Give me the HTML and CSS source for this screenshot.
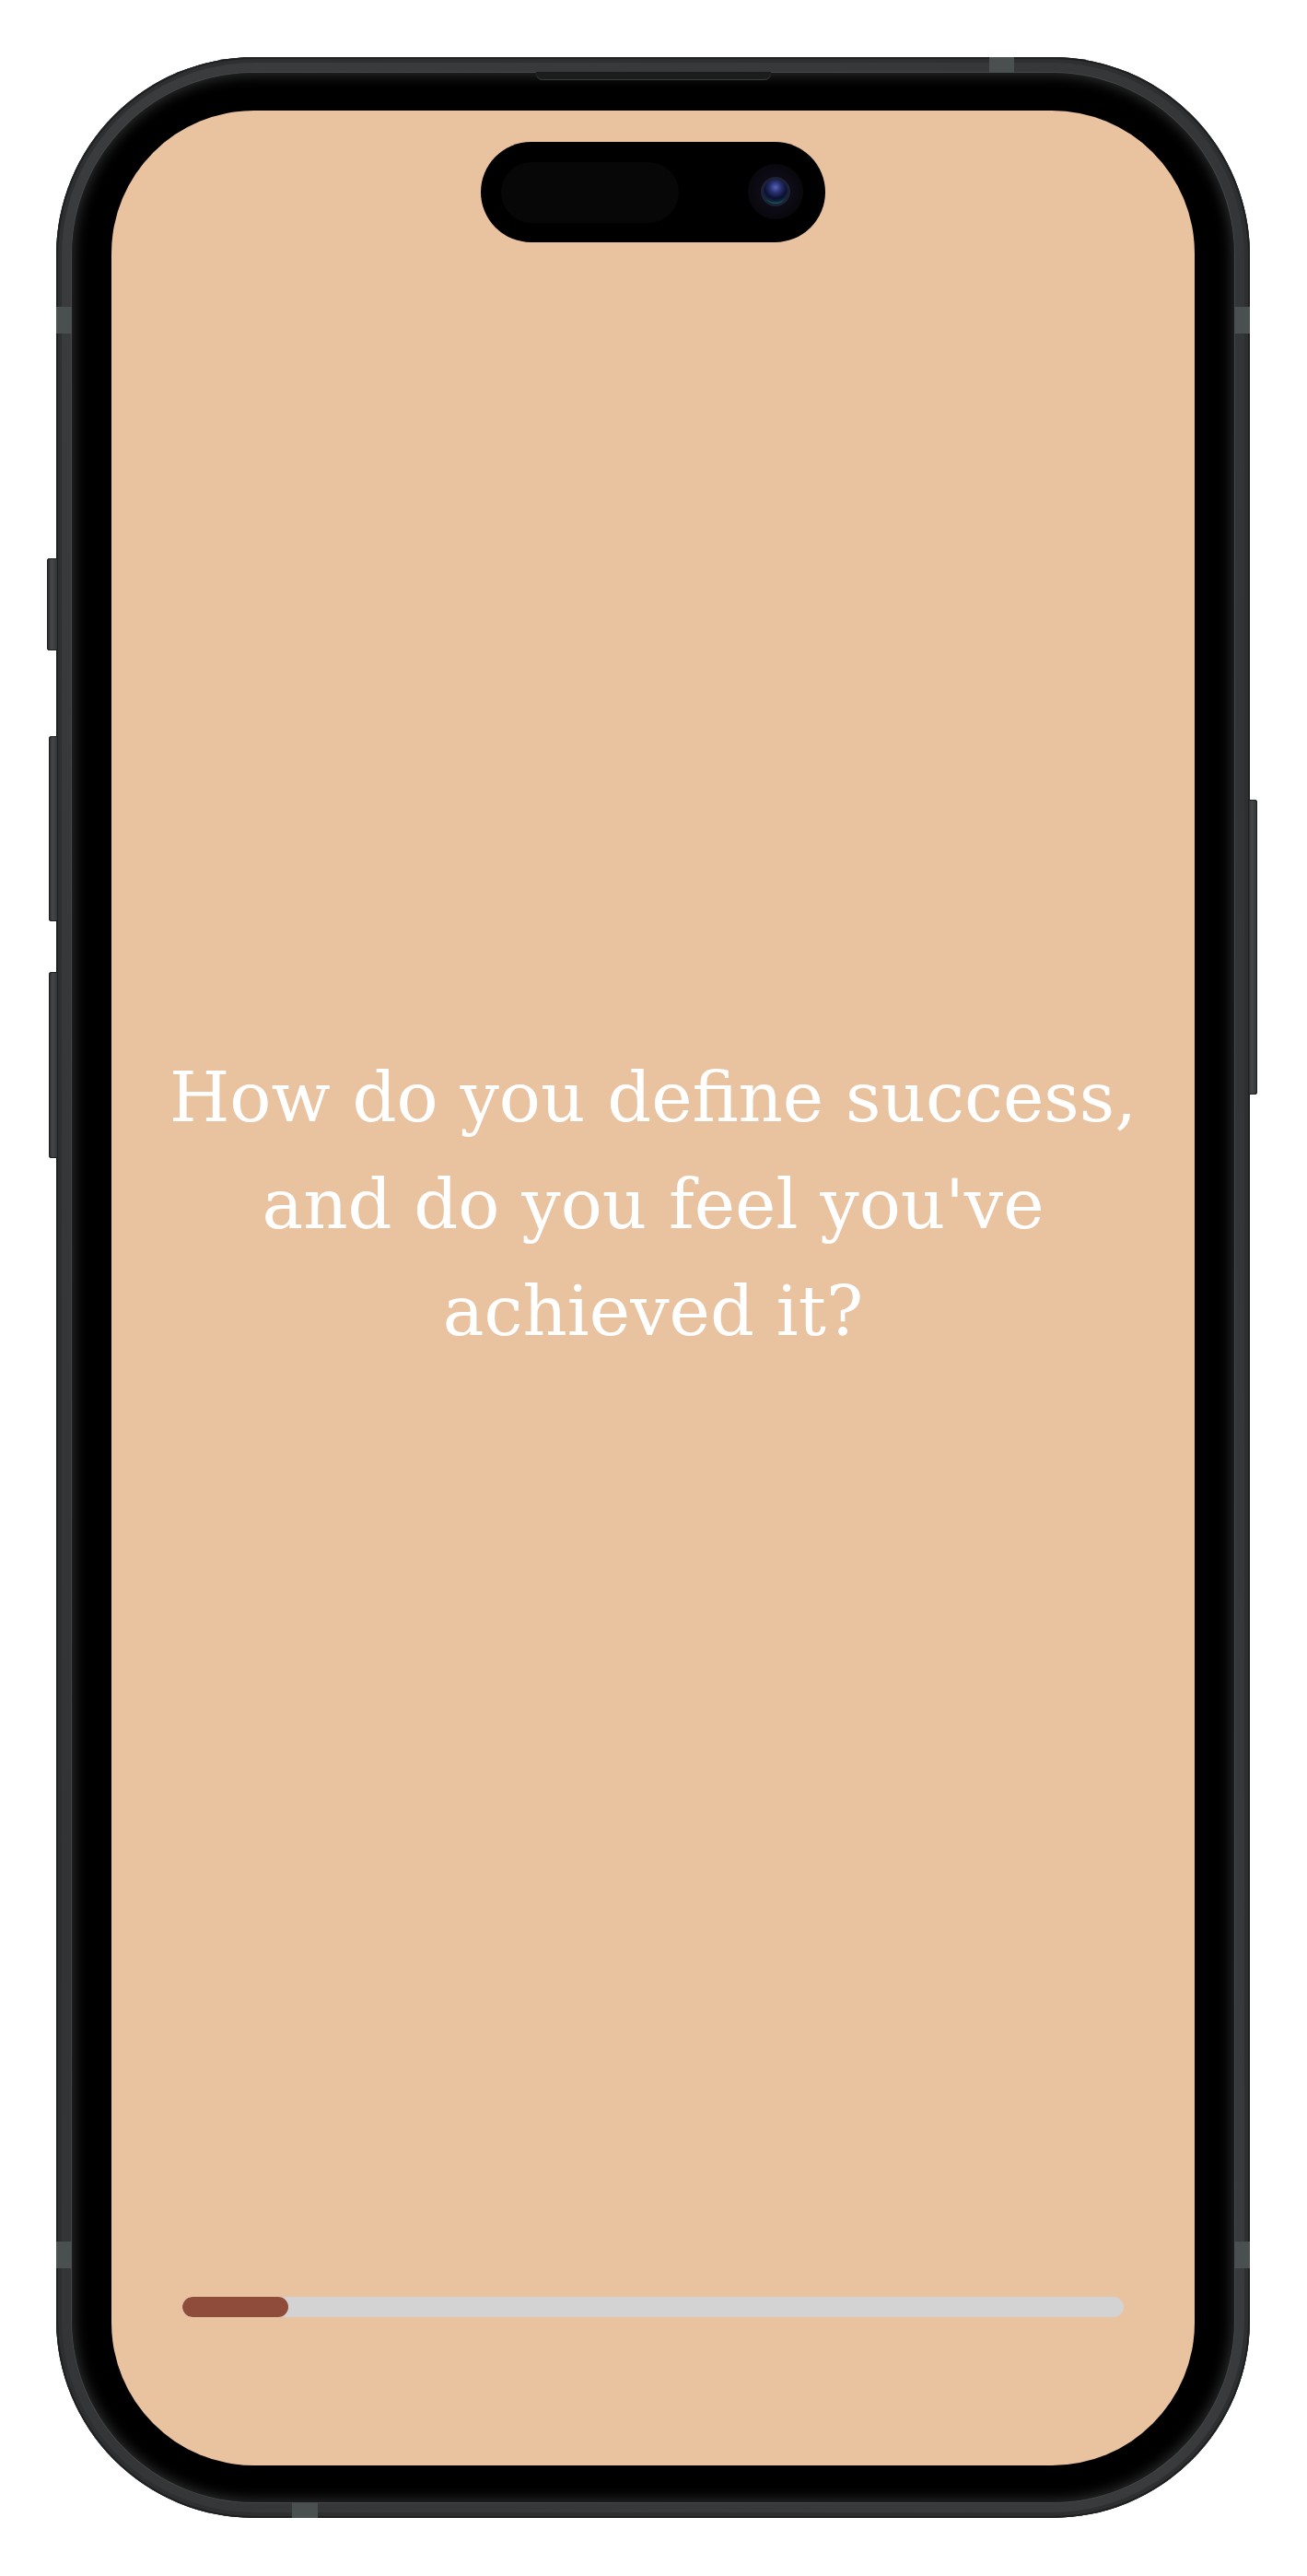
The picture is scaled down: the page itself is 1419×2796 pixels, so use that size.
FILE: index.html
```html
<!DOCTYPE html>
<html lang="en">
<head>
<meta charset="utf-8">
<title>Question</title>
<link rel="stylesheet" href="styles.css">
</head>
<body>
<div class="page">
  <div class="phone">
    <span class="btn btn-action"></span>
    <span class="btn btn-vol-up"></span>
    <span class="btn btn-vol-down"></span>
    <span class="btn btn-power"></span>
    <span class="band band-top"></span>
    <span class="band band-left-top"></span>
    <span class="band band-right-top"></span>
    <span class="band band-left-bottom"></span>
    <span class="band band-right-bottom"></span>
    <span class="band band-bottom"></span>
    <span class="speaker"></span>
    <div class="bezel">
      <div class="screen">
        <div class="island">
          <span class="island-pill"></span>
          <span class="camera"><span class="lens"></span></span>
        </div>
        <main class="question-area">
          <h1 class="question">How do you define success,<br>and do you feel you've<br>achieved it?</h1>
        </main>
        <div class="progress-area">
          <div class="track"><div class="fill" style="width: 11.25%"></div></div>
        </div>
      </div>
    </div>
  </div>
</div>
</body>
</html>
```
FILE: styles.css
```css
html, body {
  margin: 0;
  padding: 0;
  background: #ffffff;
}

.page {
  width: 1419px;
  height: 2796px;
  box-sizing: border-box;
  padding: 62px 0 0 61px;
}

.phone {
  position: relative;
  width: 1296px;
  height: 2671px;
  box-sizing: border-box;
  padding: 17px;
  border-radius: 215px;
  background: linear-gradient(135deg, #3a3c3d 0%, #313334 50%, #393b3c 100%);
  box-shadow: inset 0 0 0 2px #1f2021, inset 0 0 0 6px #2d2f30;
}

.btn {
  position: absolute;
  background: linear-gradient(90deg, #262728 0%, #46484a 40%, #2f3132 100%);
  box-shadow: inset 0 0 0 1px #1e1f20;
}
.btn-action { left: -10px; top: 544px; width: 12px; height: 100px; border-radius: 3px 0 0 3px; }
.btn-vol-up { left: -8px; top: 737px; width: 10px; height: 201px; border-radius: 3px 0 0 3px; }
.btn-vol-down { left: -8px; top: 993px; width: 10px; height: 202px; border-radius: 3px 0 0 3px; }
.btn-power { left: 1294px; top: 806px; width: 10px; height: 320px; border-radius: 0 3px 3px 0; }

.band {
  position: absolute;
  background: #4a4f4f;
}
.band-top { left: 1013px; top: 0; width: 27px; height: 17px; }
.band-left-top { left: 0; top: 271px; width: 17px; height: 29px; }
.band-right-top { right: 0; top: 271px; width: 17px; height: 29px; }
.band-left-bottom { left: 0; top: 2371px; width: 17px; height: 29px; }
.band-right-bottom { right: 0; top: 2371px; width: 17px; height: 29px; }
.band-bottom { left: 256px; bottom: 0; width: 28px; height: 17px; }

.speaker {
  position: absolute;
  left: 521px;
  top: 16px;
  width: 255px;
  height: 9px;
  border-radius: 0 0 7px 7px;
  background: #1b1c1c;
  box-shadow: inset 0 -1px 0 #3a3b3c;
  z-index: 2;
}

.bezel {
  height: 100%;
  box-sizing: border-box;
  padding: 41px 43px 40px 43px;
  border-radius: 198px;
  background: #000000;
  box-shadow: 0 0 0 1px #454748, inset 0 0 14px 3px rgba(85, 87, 88, 0.5);
}

.screen {
  position: relative;
  height: 100%;
  border-radius: 155px;
  background: #e9c2a0;
  display: flex;
  flex-direction: column;
  overflow: hidden;
}

.island {
  position: absolute;
  left: 401px;
  top: 34px;
  width: 374px;
  height: 109px;
  border-radius: 55px;
  background: #000000;
}
.island-pill {
  position: absolute;
  left: 22px;
  top: 22px;
  width: 193px;
  height: 66px;
  border-radius: 33px;
  background: #070707;
}
.camera {
  position: absolute;
  left: 290px;
  top: 24px;
  width: 60px;
  height: 60px;
  border-radius: 50%;
  background: radial-gradient(circle, #120f1c 0%, #0b0910 60%, #050407 100%);
  display: flex;
  align-items: center;
  justify-content: center;
}
.lens {
  width: 32px;
  height: 32px;
  border-radius: 50%;
  box-sizing: border-box;
  border: 3px solid #1d2236;
  background: radial-gradient(circle at 50% 32%, #5a63b8 0%, #27306e 28%, #0c1030 55%, #0d2a3a 72%, #2c8a7a 85%, #0c1030 100%);
}

.question-area {
  flex: 1;
  display: flex;
  align-items: center;
  justify-content: center;
  padding: 0 40px;
}

.question {
  margin: 0;
  font-family: "DejaVu Serif", "Liberation Serif", serif;
  font-weight: 400;
  font-size: 75px;
  line-height: 116px;
  color: #ffffff;
  text-align: center;
}

.progress-area {
  padding: 0 77px 161px;
}

.track {
  height: 22px;
  border-radius: 11px;
  background: #d3d3d3;
  overflow: hidden;
}

.fill {
  height: 100%;
  border-radius: 11px;
  background: #8f4c3a;
}
```
